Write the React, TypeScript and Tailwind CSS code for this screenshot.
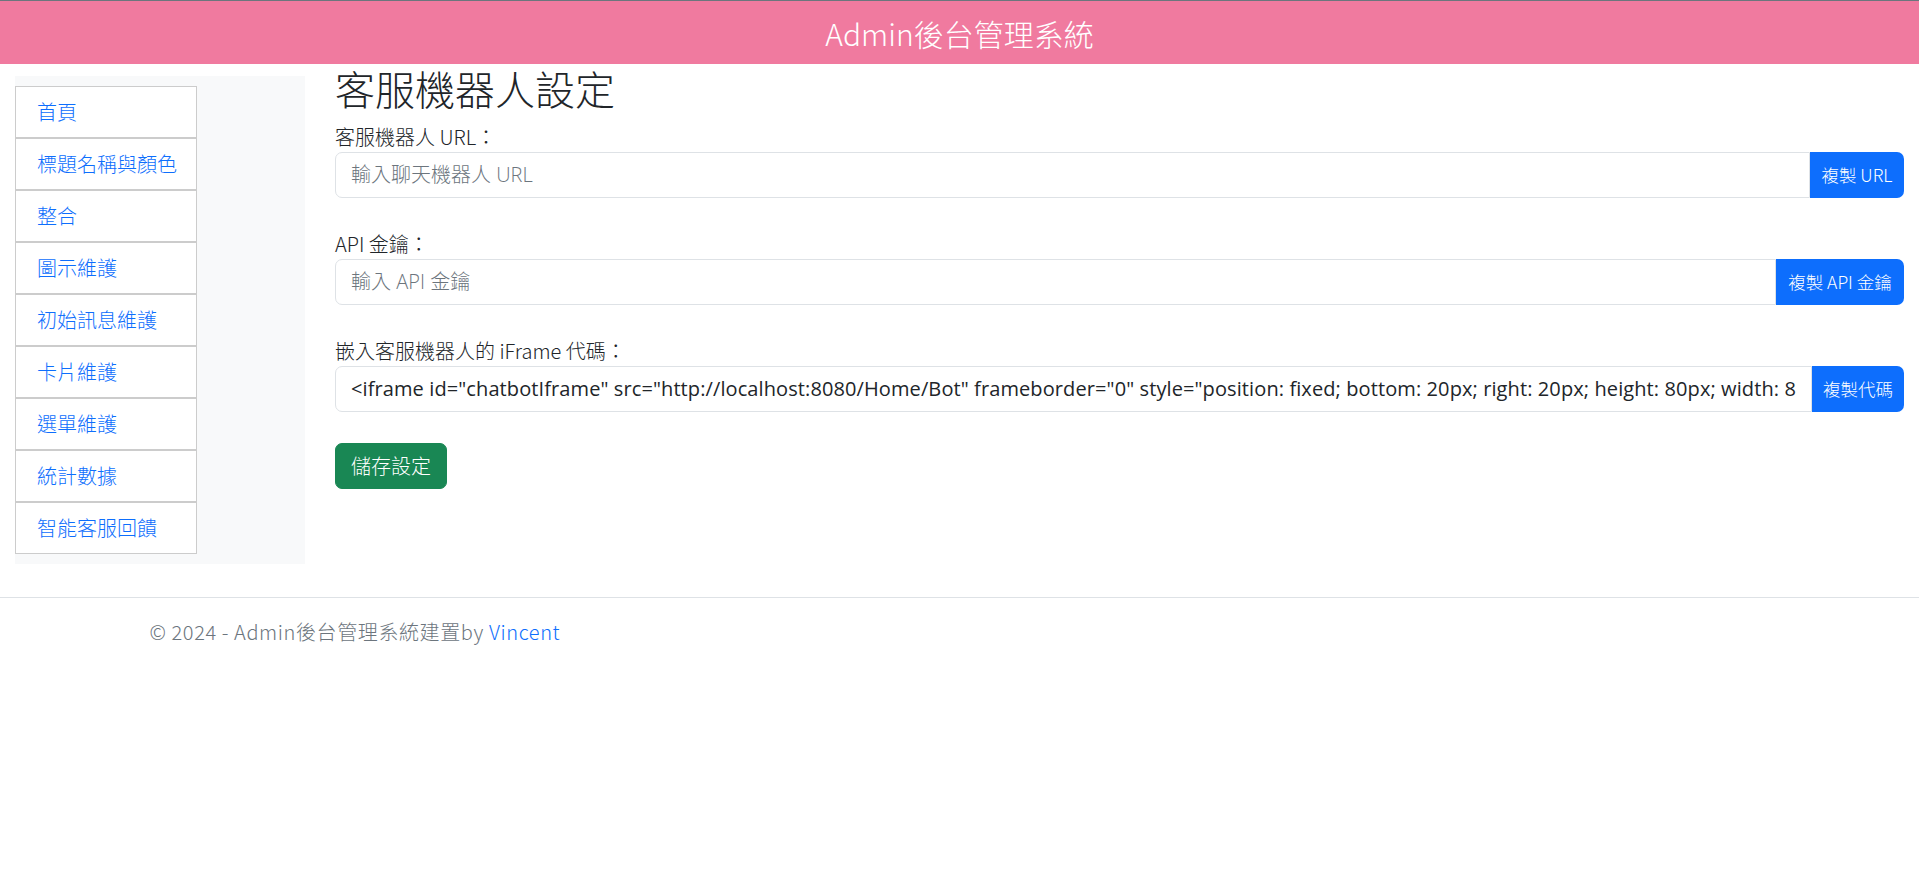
import React from 'react';

const menu = ['首頁', '標題名稱與顏色', '整合', '圖示維護', '初始訊息維護', '卡片維護', '選單維護', '統計數據', '智能客服回饋'];

const iframeCode =
  '<iframe id="chatbotIframe" src="http://localhost:8080/Home/Bot" frameborder="0" style="position: fixed; bottom: 20px; right: 20px; height: 80px; width: 80px; z-index: 9999;"></iframe>';

type FieldProps = {
  label: string;
  placeholder?: string;
  value?: string;
  button: string;
  buttonWidth: string;
};

const Field: React.FC<FieldProps> = ({ label, placeholder, value, button, buttonWidth }) => (
  <div className="mb-[31px]">
    <label className="block text-[20px] leading-[30px]">{label}</label>
    <div className="flex h-[46px]">
      <input
        className="min-w-0 flex-1 rounded-l-[7px] border border-[#dee2e6] bg-white px-[15px] text-[20px] font-normal tracking-[0.1px] text-[#212529] outline-none placeholder:font-light placeholder:tracking-normal placeholder:text-[#6c757d] font-['Segoe_UI','Open_Sans','Noto_Sans_CJK_TC',sans-serif]"
        placeholder={placeholder}
        defaultValue={value}
        readOnly={!!value}
      />
      <button
        className={`${buttonWidth} shrink-0 rounded-r-[7px] bg-[#0d6efd] text-[17.5px] text-white`}
      >
        {button}
      </button>
    </div>
  </div>
);

export default function App() {
  return (
    <div className="min-h-screen bg-white font-light text-[#212529] font-['Noto_Sans_CJK_TC','Noto_Sans',sans-serif]">
      <header className="flex h-16 items-center justify-center border-t border-[#6c757d] bg-[#f07a9f]">
        <h1 className="text-[30px] leading-none text-white">Admin後台管理系統</h1>
      </header>

      <div className="flex px-[15px]">
        <aside className="mt-3 w-[290px] shrink-0 self-start bg-[#f8f9fa] py-[10px]">
          <ul className="w-[182px]">
            {menu.map((item) => (
              <li
                key={item}
                className="flex h-[52px] items-center border border-[#cccccc] bg-white pl-[21px] text-[20px] text-[#0d6efd]"
              >
                {item}
              </li>
            ))}
          </ul>
        </aside>

        <main className="ml-[30px] flex-1">
          <h2 className="mb-[10px] text-[40px] leading-[48px]">客服機器人設定</h2>
          <Field label="客服機器人 URL：" placeholder="輸入聊天機器人 URL" button="複製 URL" buttonWidth="w-[94px]" />
          <Field label="API 金鑰：" placeholder="輸入 API 金鑰" button="複製 API 金鑰" buttonWidth="w-[128px]" />
          <Field label="嵌入客服機器人的 iFrame 代碼：" value={iframeCode} button="複製代碼" buttonWidth="w-[92px]" />
          <button className="h-[46px] rounded-[7px] border border-[#198754] bg-[#198754] px-[15px] text-[20px] text-white">
            儲存設定
          </button>
        </main>
      </div>

      <footer className="mt-[33px] border-t border-[#dee2e6]">
        <div className="mx-auto w-[1650px] px-[15px] pt-[19px] text-[20px] leading-[30px] tracking-[0.6px] text-[#6c757d]">
          © 2024 - Admin後台管理系統建置by <a className="text-[#0d6efd]">Vincent</a>
        </div>
      </footer>
    </div>
  );
}
